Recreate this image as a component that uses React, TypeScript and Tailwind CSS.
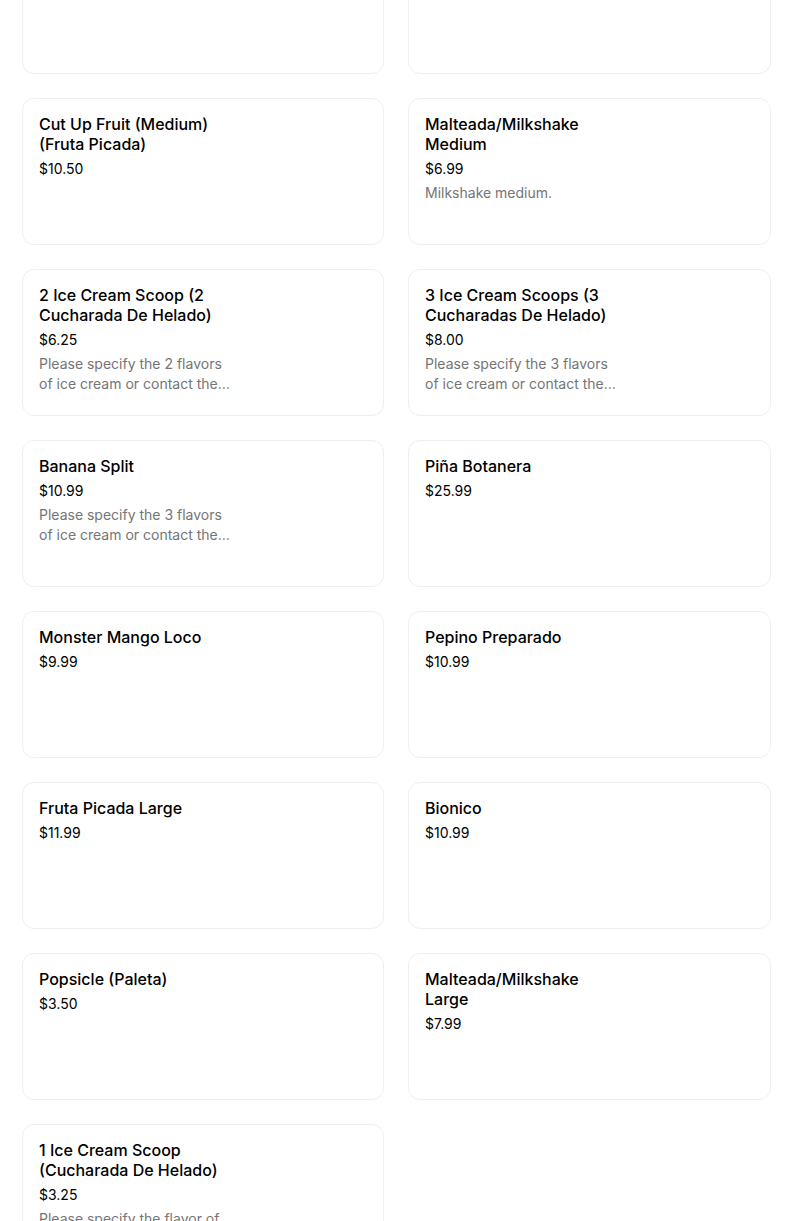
type Item = {
  name: string;
  price: string;
  desc?: string;
};

const items: Item[] = [
  { name: '', price: '' },
  { name: '', price: '' },
  { name: 'Cut Up Fruit (Medium) (Fruta Picada)', price: '$10.50' },
  { name: 'Malteada/Milkshake Medium', price: '$6.99', desc: 'Milkshake medium.' },
  {
    name: '2 Ice Cream Scoop (2 Cucharada De Helado)',
    price: '$6.25',
    desc: 'Please specify the 2 flavors of ice cream or contact the restaurant for available flavors.',
  },
  {
    name: '3 Ice Cream Scoops (3 Cucharadas De Helado)',
    price: '$8.00',
    desc: 'Please specify the 3 flavors of ice cream or contact the restaurant for available flavors.',
  },
  {
    name: 'Banana Split',
    price: '$10.99',
    desc: 'Please specify the 3 flavors of ice cream or contact the restaurant for available flavors.',
  },
  { name: 'Piña Botanera', price: '$25.99' },
  { name: 'Monster Mango Loco', price: '$9.99' },
  { name: 'Pepino Preparado', price: '$10.99' },
  { name: 'Fruta Picada Large', price: '$11.99' },
  { name: 'Bionico', price: '$10.99' },
  { name: 'Popsicle (Paleta)', price: '$3.50' },
  { name: 'Malteada/Milkshake Large', price: '$7.99' },
  {
    name: '1 Ice Cream Scoop (Cucharada De Helado)',
    price: '$3.25',
    desc: 'Please specify the flavor of ice cream or contact the restaurant for available flavors.',
  },
];

function MenuCard({ item }: { item: Item }) {
  return (
    <div className="h-[147px] rounded-xl border border-[#efefef] bg-white px-4 pt-[15px] overflow-hidden">
      {item.name && (
        <div className="w-[192px]">
          <h3 className="text-[16px] leading-5 font-medium text-black">{item.name}</h3>
          <p className="mt-[5px] text-[14px] leading-5 text-black">{item.price}</p>
          {item.desc && (
            <p className="mt-1 text-[14px] leading-5 text-[#757575] line-clamp-2">{item.desc}</p>
          )}
        </div>
      )}
    </div>
  );
}

export default function App() {
  return (
    <div
      className="min-h-screen bg-white overflow-hidden"
      style={{ fontFamily: 'Inter, "Noto Sans", sans-serif' }}
    >
      <div className="ml-[22px] w-[749px] -mt-[73px] grid grid-cols-[362px_363px] gap-x-6 gap-y-6">
        {items.map((item, i) => (
          <MenuCard key={i} item={item} />
        ))}
      </div>
    </div>
  );
}
